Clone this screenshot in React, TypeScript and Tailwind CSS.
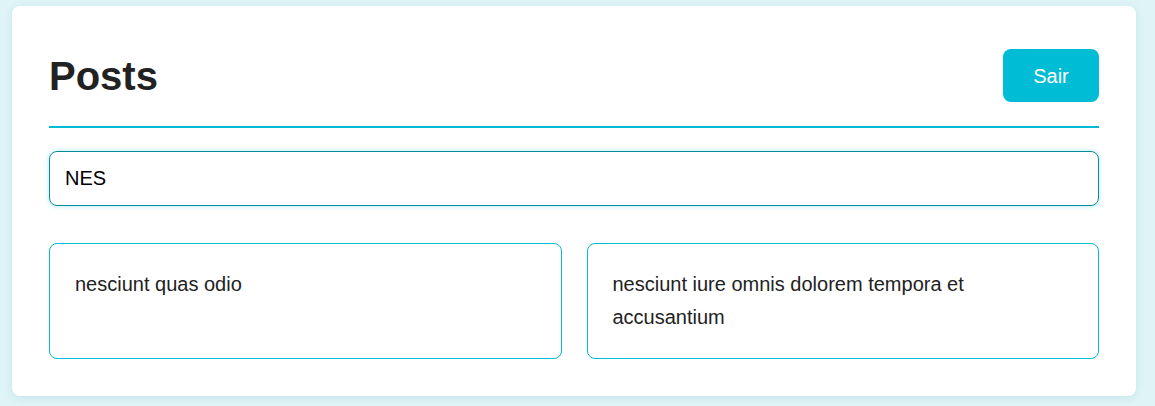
export default function App() {
  return (
    <div className="min-h-screen bg-[#dff4f7] pt-[6px] pl-[12px] pr-[19px] pb-[10px]" style={{ fontFamily: '"Liberation Sans", Arial, sans-serif' }}>
      <div className="bg-white rounded-[8px] px-[37px] pt-[43px] pb-[37px] shadow-[0_2px_8px_rgba(0,120,140,0.12)]">
        <div className="flex items-center justify-between pb-[24px] border-b-2 border-[#00bcd4]">
          <h1 className="text-[40px] font-bold text-[#222] leading-none">Posts</h1>
          <button className="w-[96px] h-[53px] rounded-[8px] bg-[#00bcd4] text-white text-[20px]">Sair</button>
        </div>
        <div className="mt-[23px]">
          <input
            readOnly
            value="NES"
            className="w-full h-[55px] rounded-[8px] border border-[#0a8a98] px-[15px] text-[20px] text-black outline-none shadow-[0_0_5px_rgba(0,188,212,0.35)]"
          />
        </div>
        <div className="mt-[37px] grid grid-cols-2 gap-[25px]">
          <div className="rounded-[8px] border border-[#00bcd4] px-[25px] py-[24px] text-[20px] leading-[33px] text-[#222]">
            nesciunt quas odio
          </div>
          <div className="rounded-[8px] border border-[#00bcd4] px-[25px] py-[24px] text-[20px] leading-[33px] text-[#222]">
            nesciunt iure omnis dolorem tempora et accusantium
          </div>
        </div>
      </div>
    </div>
  );
}
